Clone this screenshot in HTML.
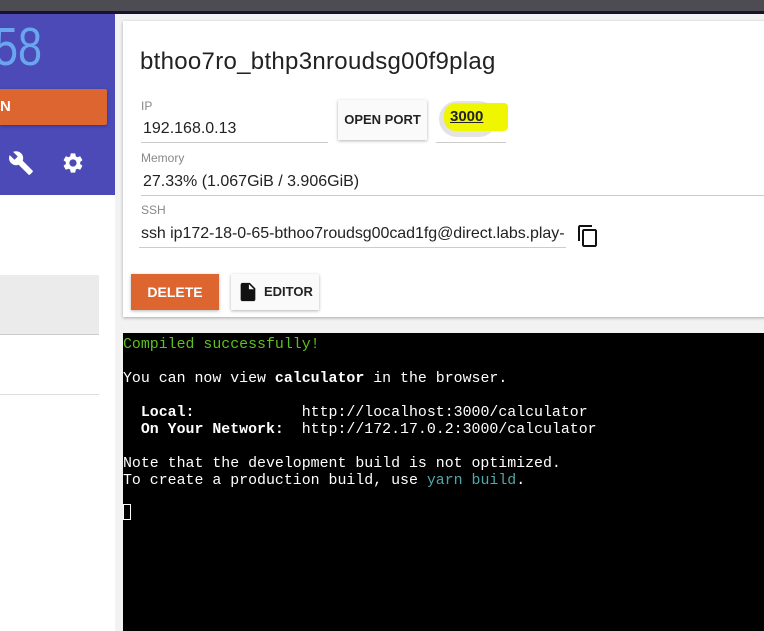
<!DOCTYPE html>
<html><head><style>
body{margin:0;width:764px;height:631px;overflow:hidden;background:#f2f2f2;font-family:"Liberation Sans",sans-serif;position:relative}
.a{position:absolute}
.lbl{font-size:12px;color:#888}
.val{font-size:16px;color:#222}
.ul{border-bottom:1px solid #ccc}
.term{font-family:"Liberation Mono",monospace;font-size:14.9px;color:#fff;white-space:pre;line-height:17px}
</style></head><body>
<div class="a" style="left:0;top:0;width:764px;height:11px;background:#4d4c52"></div>
<div class="a" style="left:0;top:11px;width:764px;height:3px;background:#1a1030"></div>
<div class="a" style="left:0;top:14px;width:115px;height:617px;background:#fff"></div>
<div class="a" style="left:0;top:14px;width:115px;height:181px;background:#4b4ab6"></div>
<div class="a" style="left:-6px;top:16px;font-size:54px;color:#6aa6f0;transform:scaleX(0.8);transform-origin:left">58</div>
<div class="a" style="left:0;top:89px;width:107px;height:36px;background:#dd6630;border-radius:0 2px 2px 0;box-shadow:0 1px 3px rgba(0,0,0,.3)"></div>
<div class="a" style="left:0;top:98px;color:#fff;font-weight:bold;font-size:15px">N</div>
<svg class="a" style="left:8px;top:150px" width="26" height="26" viewBox="0 0 24 24"><path fill="#fff" d="M22.7 19l-9.1-9.1c.9-2.3.4-5-1.5-6.9-2-2-5-2.4-7.4-1.3L9 6 6 9 1.6 4.7C.4 7.1.9 10.1 2.9 12.1c1.9 1.9 4.6 2.4 6.9 1.5l9.1 9.1c.4.4 1 .4 1.4 0l2.3-2.3c.5-.4.5-1.1.1-1.4z"/></svg>
<svg class="a" style="left:61px;top:151px" width="24" height="24" viewBox="0 0 24 24"><path fill="#fff" d="M19.14 12.94c.04-.3.06-.61.06-.94 0-.32-.02-.64-.07-.94l2.030-1.58a.49.49 0 00.12-.61l-1.92-3.32a.488.488 0 00-.59-.22l-2.39.96c-.5-.38-1.03-.7-1.62-.94l-.36-2.54a.484.484 0 00-.48-.41h-3.84c-.24 0-.43.17-.47.41l-.36 2.54c-.59.24-1.130.57-1.62.94l-2.39-.96c-.22-.08-.47 0-.59.22L2.74 8.87c-.12.21-.08.47.12.61l2.03 1.58c-.05.3-.09.63-.09.94s.02.64.07.94l-2.03 1.58a.49.49 0 00-.12.61l1.92 3.32c.12.22.37.29.59.22l2.39-.96c.5.38 1.03.7 1.62.94l.36 2.54c.05.24.24.41.48.41h3.840c.24 0 .44-.17.47-.41l.36-2.54c.59-.24 1.13-.56 1.62-.94l2.39.96c.22.08.47 0 .59-.22l1.92-3.32c.12-.22.07-.47-.12-.61l-2.01-1.58zM12 15.6c-1.98 0-3.6-1.62-3.6-3.6s1.62-3.6 3.6-3.6 3.6 1.62 3.6 3.6-1.62 3.6-3.6 3.6z"/></svg>
<div class="a" style="left:0;top:275px;width:99px;height:59px;background:#ebebeb;border-bottom:1px solid #ccc"></div>
<div class="a" style="left:0;top:394px;width:99px;height:1px;background:#ddd"></div>

<div class="a" style="left:123px;top:21px;width:650px;height:296px;background:#fff;box-shadow:0 1px 3px rgba(0,0,0,.3)"></div>
<div class="a" style="left:140px;top:48px;font-size:24px;color:#222;letter-spacing:0.3px">bthoo7ro_bthp3nroudsg00f9plag</div>
<div class="a lbl" style="left:141px;top:99px">IP</div>
<div class="a val" style="left:143px;top:120px">192.168.0.13</div>
<div class="a ul" style="left:141px;top:142px;width:187px"></div>
<div class="a" style="left:338px;top:100px;width:89px;height:40px;background:#fafafa;box-shadow:0 1px 3px rgba(0,0,0,.3);font-size:13px;font-weight:bold;color:#222;text-align:center;line-height:40px">OPEN PORT</div>
<div class="a" style="left:439px;top:101px;width:58px;height:36px;border-radius:18px;background:#e3e3e3"></div>
<div class="a" style="left:444px;top:103px;width:64px;height:28px;background:#f0f500;border-radius:12px 4px 4px 12px"></div>
<div class="a" style="left:450px;top:108px;font-size:15px;font-weight:bold;text-decoration:underline;color:#222">3000</div>
<div class="a ul" style="left:436px;top:142px;width:70px"></div>
<div class="a lbl" style="left:141px;top:151px">Memory</div>
<div class="a val" style="left:143px;top:173px">27.33% (1.067GiB / 3.906GiB)</div>
<div class="a ul" style="left:141px;top:195px;width:623px"></div>
<div class="a lbl" style="left:141px;top:203px">SSH</div>
<div class="a val" style="left:141px;top:225px;letter-spacing:-0.05px">ssh ip172-18-0-65-bthoo7roudsg00cad1fg@direct.labs.play-</div>
<div class="a ul" style="left:139px;top:247px;width:427px"></div>
<svg class="a" style="left:576px;top:223px" width="24" height="26" viewBox="0 0 24 24"><path fill="#111" d="M16 1H4c-1.1 0-2 .9-2 2v14h2V3h12V1zm3 4H8c-1.1 0-2 .9-2 2v14c0 1.1.9 2 2 2h11c1.1 0 2-.9 2-2V7c0-1.1-.9-2-2-2zm0 16H8V7h11v14z"/></svg>
<div class="a" style="left:131px;top:274px;width:88px;height:36px;background:#dd6630;box-shadow:0 1px 3px rgba(0,0,0,.3);color:#fff;font-size:14px;font-weight:bold;text-align:center;line-height:36px">DELETE</div>
<div class="a" style="left:231px;top:274px;width:88px;height:36px;background:#fafafa;box-shadow:0 1px 3px rgba(0,0,0,.3);font-size:13px;font-weight:bold;color:#222;line-height:36px"><svg style="position:absolute;left:6px;top:6px" width="22" height="24" viewBox="0 0 24 24"><path fill="#111" d="M6 2c-1.1 0-2 .9-2 2v16c0 1.1.9 2 2 2h12c1.1 0 2-.9 2-2V8l-6-6H6zm7 7V3.5L18.5 9H13z"/></svg><span style="position:absolute;left:33px">EDITOR</span></div>

<div class="a" style="left:123px;top:333px;width:641px;height:298px;background:#000"></div>
<div class="a term" style="left:123px;top:337px"><span style="color:#5fbf1f">Compiled successfully!</span>

You can now view <b>calculator</b> in the browser.

  <b>Local:</b>            http://localhost:3000/calculator
  <b>On Your Network:</b>  http://172.17.0.2:3000/calculator

Note that the development build is not optimized.
To create a production build, use <span style="color:#4fa8a8">yarn build</span>.

</div>
<div class="a" style="left:123px;top:504px;width:8px;height:16px;border:1px solid #fff;box-sizing:border-box"></div>
</body></html>
